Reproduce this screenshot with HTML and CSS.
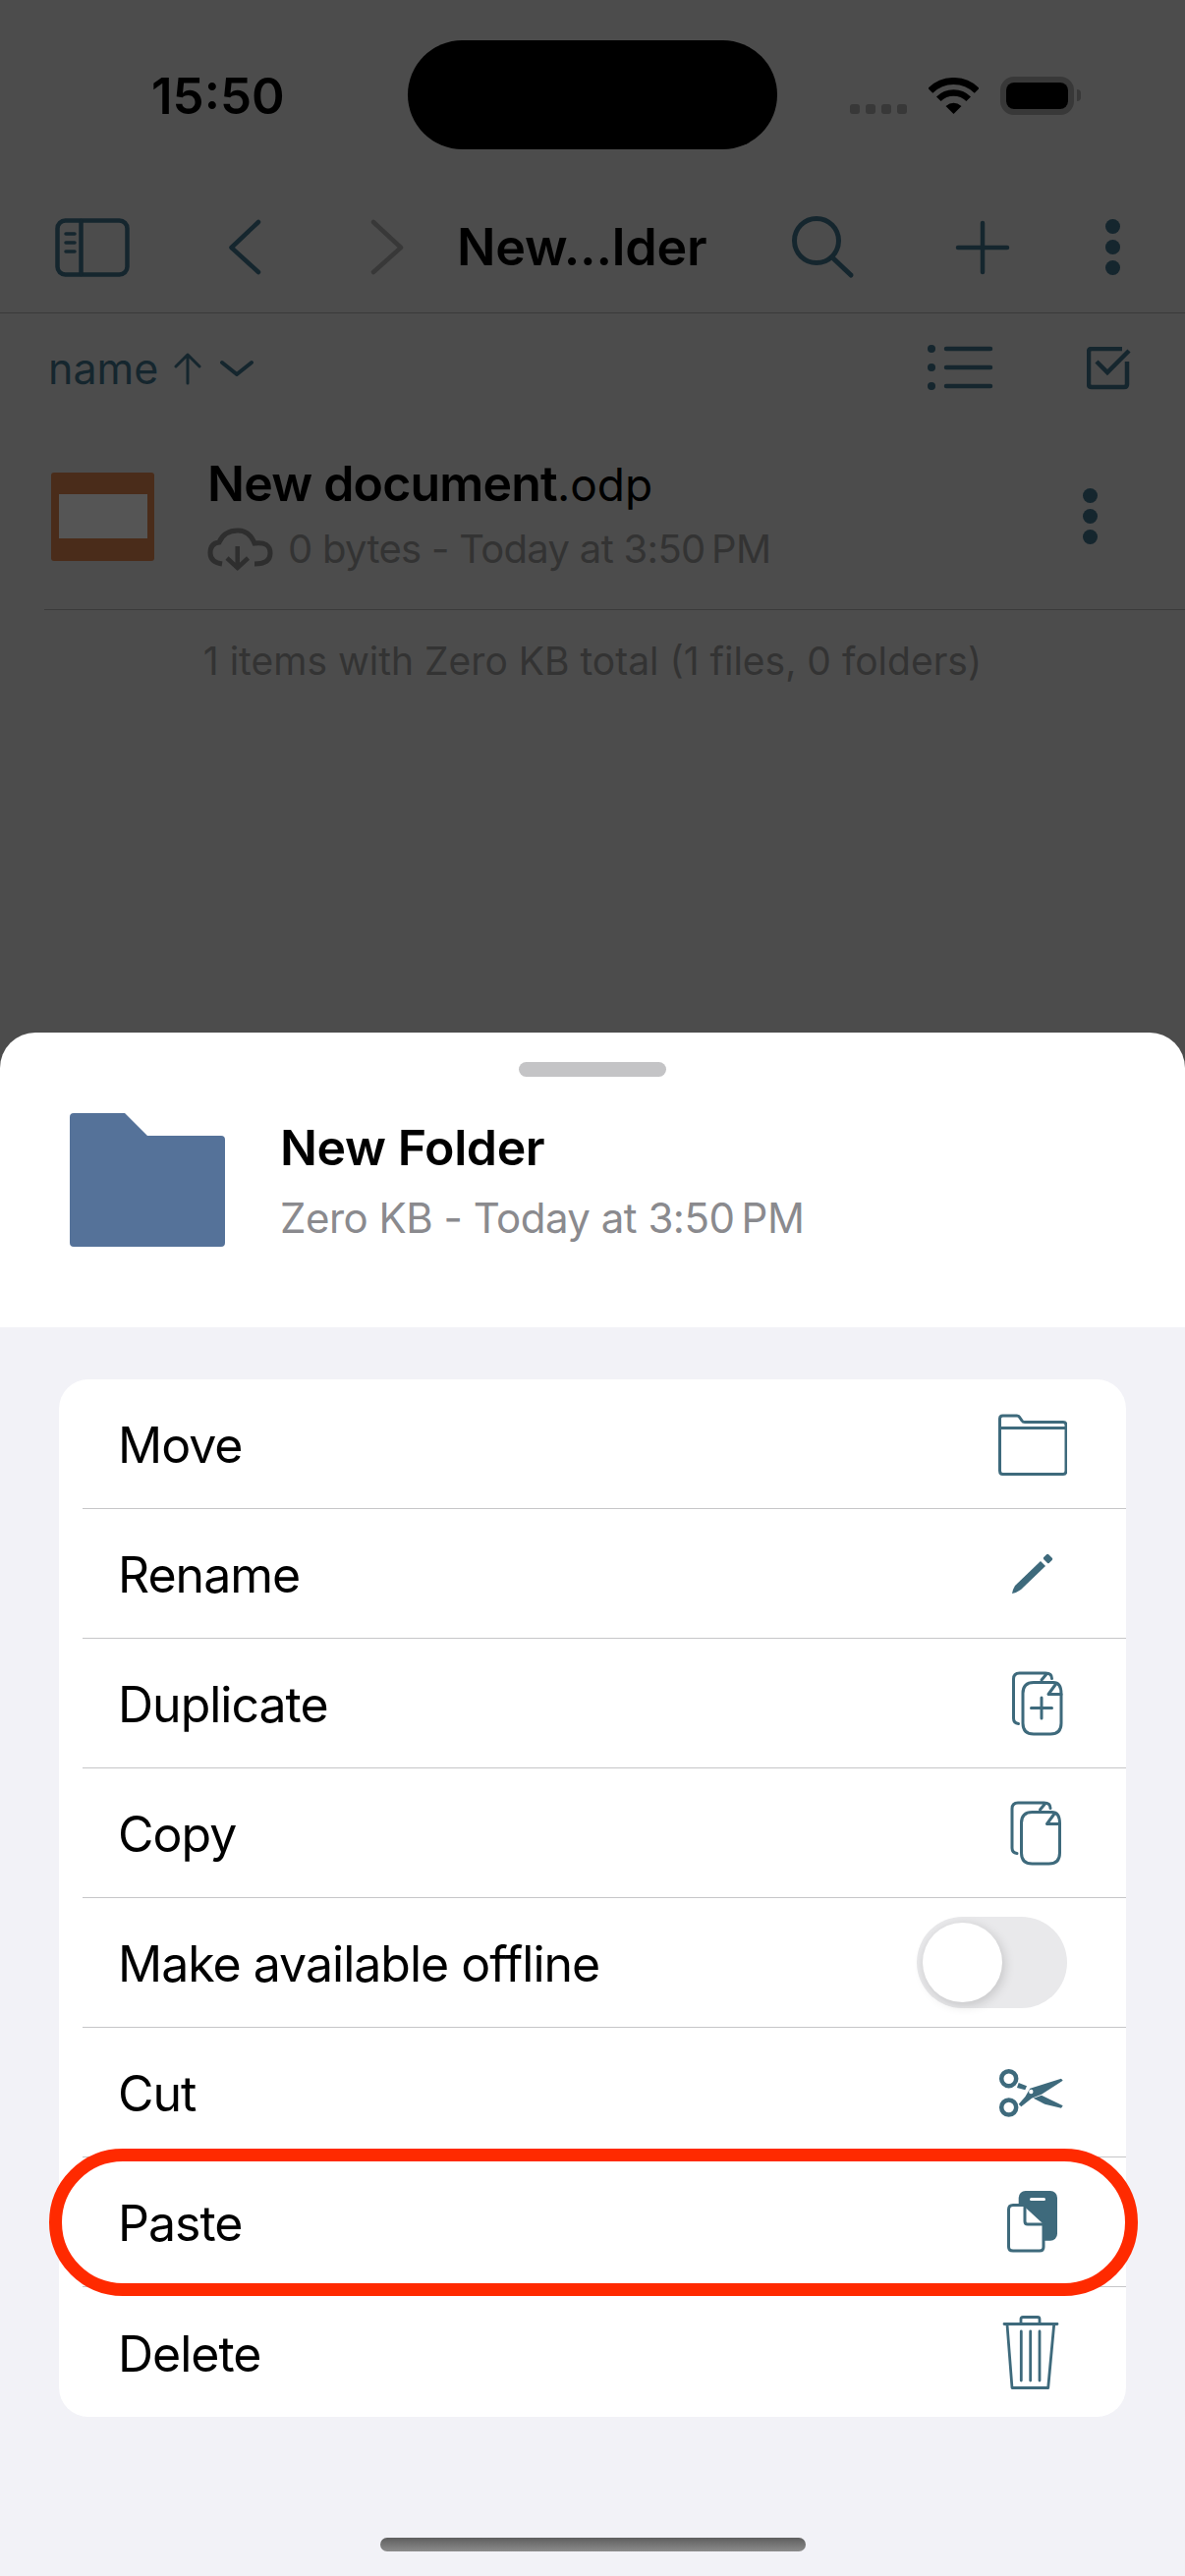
FILE: index.html
```html
<!DOCTYPE html>
<html lang="en">

<head>
  <meta charset="UTF-8">
  <meta name="viewport" content="width=device-width, initial-scale=1.0">
  <title>New Folder</title>
  <link rel="stylesheet" href="styles.css">
</head>

<body>
  <div class="page">
    <div class="backdrop">
      <div class="status">
        <div class="time">15:50</div>
        <div class="island"></div>
        <div class="signal"><i></i><i></i><i></i><i></i></div>
        <svg class="wifi" width="51" height="37" viewBox="0 0 51 37">
          <path d="M1.8 13.3A33.5 33.5 0 0 1 49.2 13.3" fill="none" stroke="#000" stroke-width="7" />
          <path d="M10.3 21.8A21.5 21.5 0 0 1 40.7 21.8" fill="none" stroke="#000" stroke-width="6.5" />
          <path d="M25.5 37L17.5 29Q25.5 22.5 33.5 29Z" fill="#000" />
        </svg>
        <div class="battery"><div class="battery-fill"></div></div>
        <div class="battery-cap"></div>
      </div>

      <div class="toolbar">
        <svg class="tb-sidebar" width="76" height="60" viewBox="0 0 76 60" fill="none" stroke="#15262e" stroke-width="4.5" stroke-linecap="round">
          <rect x="2.5" y="2.5" width="71" height="55" rx="8" />
          <path d="M26.5 3V57" />
          <path d="M11 16H20M11 25H20M11 34H20" stroke-width="3.5" />
        </svg>
        <svg class="tb-back" width="36" height="60" viewBox="0 0 36 60" fill="none" stroke="#15262e" stroke-width="4.5" stroke-linecap="round" stroke-linejoin="round">
          <path d="M31 4L3.500 30L31 55" />
        </svg>
        <svg class="tb-forward" width="36" height="60" viewBox="0 0 36 60" fill="none" stroke="#383838" stroke-width="4.500" stroke-linecap="round" stroke-linejoin="round">
          <path d="M4 4L32 30L4 55" />
        </svg>
        <div class="tb-title">New...lder</div>
        <svg class="tb-search" width="66" height="66" viewBox="0 0 66 66" fill="none" stroke="#15262e" stroke-width="5" stroke-linecap="round">
          <circle cx="27" cy="27" r="22.500" />
          <path d="M43 44L62 62" />
        </svg>
        <svg class="tb-plus" width="56" height="56" viewBox="0 0 56 56" fill="none" stroke="#15262e" stroke-width="4.500" stroke-linecap="round">
          <path d="M28 3V53M3 28H53" />
        </svg>
        <div class="dots tb-dots"><i></i><i></i><i></i></div>
      </div>

      <div class="sortbar">
        <div class="sort-label">name</div>
        <svg class="sort-arrow" width="28" height="34" viewBox="0 0 28 34" fill="none" stroke="#15262e" stroke-width="3" stroke-linecap="round" stroke-linejoin="round">
          <path d="M14 32V3M2 15L14 3L26 15" />
        </svg>
        <svg class="sort-caret" width="36" height="18" viewBox="0 0 36 18" fill="none" stroke="#15262e" stroke-width="4" stroke-linecap="round" stroke-linejoin="round">
          <path d="M3 3L18 15L33 3" />
        </svg>
        <svg class="sort-list" width="68" height="50" viewBox="0 0 68 50" fill="none" stroke="#15262e" stroke-width="4.500" stroke-linecap="round">
          <path d="M19 6H64M19 25H64M19 44H64" />
          <g fill="#15262e" stroke="none">
            <circle cx="4" cy="6" r="4" />
            <circle cx="4" cy="25" r="4" />
            <circle cx="4" cy="44" r="4" />
          </g>
        </svg>
        <svg class="sort-check" width="46" height="44" viewBox="0 0 46 44" fill="none" stroke="#15262e" stroke-width="4.500">
          <path d="M36 2H5Q2 2 2 5V38Q2 41 5 41H38Q41 41 41 38V15" />
          <path d="M10 15L21 26L43 4" />
        </svg>
      </div>

      <div class="file-row">
        <div class="file-icon"><div class="file-icon-inner"></div></div>
        <div class="file-info">
          <div class="file-name">New document<span class="file-ext">.odp</span></div>
          <div class="file-meta">
            <svg width="67" height="45" viewBox="0 0 67 45" fill="none" stroke="#2e2e2e" stroke-width="5">
              <path d="M15 37Q3 35 3 26Q3 16 12 15Q17 3 31 3Q43 3 48 16Q64 14 64 26Q64 37 48 37" />
              <path d="M30.700 19V41M20 31L30.700 41L41.500 31" stroke-width="4.500" />
            </svg>
            <span>0 bytes - Today at 3:50&thinsp;PM</span>
          </div>
        </div>
        <div class="dots file-dots"><i></i><i></i><i></i></div>
      </div>

      <div class="summary">1 items with Zero KB total (1 files, 0 folders)</div>
    </div>

    <div class="sheet">
      <div class="handle"></div>
      <div class="sheet-head">
        <svg width="158" height="136" viewBox="0 0 158 136">
          <path d="M4 0H56L79 23H154Q158 23 158 27V132Q158 136 154 136H4Q0 136 0 132V4Q0 0 4 0Z" fill="#557299" />
        </svg>
        <div class="sheet-info">
          <div class="sheet-title">New Folder</div>
          <div class="sheet-sub">Zero KB - Today at 3:50&thinsp;PM</div>
        </div>
      </div>
    </div>

    <div class="actions">
      <ul class="group">
        <li>
          <span>Move</span>
          <svg class="act-icon" width="76" height="76" viewBox="0 0 76 76">
            <path d="M7.500 22V12Q7.500 9 10.500 9H25Q27 9 28 11L30 14Q31 15.500 33 15.500H72Q75 15.500 75 18.500V65Q75 68.500 72 68.500H10.500Q7.500 68.500 7.500 65ZM7.500 21.500H75" />
          </svg>
        </li>
        <li>
          <span>Rename</span>
          <svg class="act-icon" width="76" height="76" viewBox="0 0 76 76">
            <path class="solid" d="M20 58Q21 53 23 50L49 25L54 30L29 54Q25 57 20 58Z" />
            <rect class="solid" x="52.500" y="19" width="8" height="7" rx="1.500" transform="rotate(45 56.500 22.500)" />
          </svg>
        </li>
        <li>
          <span>Duplicate</span>
          <svg class="act-icon" width="76" height="76" viewBox="0 0 76 76">
            <path d="M26.500 58.500Q21.500 58 21.500 53V13Q21.500 7 27.500 7H54Q60.500 7 60.500 12.500M50 14L55 8" />
            <path d="M42 16.500H62Q70 16.500 70 28V58Q70 69 59 69H42Q31 69 31 58V27.500Q31 16.500 42 16.500Z" />
            <path d="M65 17.500L57 28.500H70M50 32V53M39.500 42.500H60.500" />
          </svg>
        </li>
        <li>
          <span>Copy</span>
          <svg class="act-icon" width="76" height="76" viewBox="0 0 76 76">
            <path d="M25 58.500Q20 58 20 53V13Q20 7 26 7H52.500Q59 7 59 12.500M48.500 14L53.500 8" />
            <path d="M40.500 16.500H60.500Q68.500 16.500 68.500 28V58Q68.500 69 57.500 69H40.500Q29.500 69 29.500 58V27.500Q29.500 16.500 40.500 16.500Z" />
            <path d="M63.500 17.500L55.500 28.500H68.500" />
          </svg>
        </li>
        <li>
          <span>Make available offline</span>
          <div class="toggle"><div class="knob"></div></div>
        </li>
        <li>
          <span>Cut</span>
          <svg class="act-icon" width="76" height="76" viewBox="0 0 76 76">
            <circle cx="16.700" cy="23.700" r="7.500" stroke-width="4.500" />
            <circle cx="16.700" cy="53" r="7.500" stroke-width="4.500" />
            <path class="solid" d="M26.700 28L35 31.300L33.300 35.300L25 33Z" />
            <path class="solid" d="M26.700 49.700L33.300 42.300L38.300 33.700L70 23.700L71.700 25.700L50 39.700L40 43.700L29.300 52.300Z" />
            <path class="solid" d="M50 40.700L71.700 51.300L70 53.700L53.300 49.700L41.700 43.700Z" />
            <circle cx="39.300" cy="37" r="2.200" fill="#fff" stroke="none" />
          </svg>
        </li>
        <li>
          <span>Paste</span>
          <svg class="act-icon" width="76" height="76" viewBox="0 0 76 76">
            <rect class="solid" x="26.700" y="6" width="39.300" height="50.700" rx="7" />
            <rect x="38" y="13" width="16" height="3" rx="1.500" fill="#fff" stroke="none" />
            <path fill="#fff" d="M21 20.500H33L52 38V63Q52 67 48 67H21Q16.500 67 16.500 63V25Q16.500 20.500 21 20.500Z" />
            <path d="M33 21V37Q33 40 36 40H52" />
          </svg>
        </li>
        <li>
          <span>Delete</span>
          <svg class="act-icon" width="76" height="76" viewBox="0 0 76 76">
            <path d="M12 9.500H66M29 9V4.500Q29 2.500 31 2.500H46Q48 2.500 48 4.500V9M15 10L20 74.500H56.700L62.700 10" stroke-width="2.800" />
            <path d="M29.300 17V67M38.700 17V67M48 17V67" stroke-width="2.800" />
          </svg>
        </li>
      </ul>
      <div class="home-bar"></div>
    </div>

    <div class="highlight"></div>
  </div>
</body>

</html>
```

FILE: styles.css
```css
body,
html {
  width: 100%;
  height: 100%;
  padding: 0;
  margin: 0;
}

body {
  font-family: Inter, "Liberation Sans", sans-serif;
  background: #f2f2f7;
}

.page {
  position: relative;
  width: 1206px;
  height: 2622px;
  overflow: hidden;
  display: flex;
  flex-direction: column;
}

/* dimmed screen behind the sheet */
.backdrop {
  height: 1090px;
  margin-bottom: -39px;
  background: #4c4c4c;
  flex-shrink: 0;
}

.status {
  display: flex;
  height: 190px;
}

.time {
  width: 261px;
  margin-left: 154px;
  margin-top: 76px;
  font-size: 51px;
  line-height: 44px;
  font-weight: 600;
  color: #000;
}

.island {
  width: 376px;
  height: 111px;
  margin-top: 41px;
  border-radius: 56px;
  background: #000;
}

.signal {
  display: flex;
  gap: 6px;
  height: 10px;
  margin-left: 74px;
  margin-top: 106px;
}

.signal i {
  width: 10px;
  height: 10px;
  border-radius: 3px;
  background: #383838;
}

.wifi {
  margin-left: 22px;
  margin-top: 79px;
}

.battery {
  box-sizing: border-box;
  width: 75px;
  height: 39px;
  margin-left: 22px;
  margin-top: 78px;
  border: 6px solid #383838;
  border-radius: 14px;
}

.battery-fill {
  height: 100%;
  background: #000;
  border-radius: 8px;
}

.battery-cap {
  width: 4px;
  height: 12px;
  margin-left: 3px;
  margin-top: 91px;
  border-radius: 0 6px 6px 0;
  background: #383838;
}

.toolbar {
  display: flex;
  align-items: center;
  box-sizing: border-box;
  height: 129px;
  padding-bottom: 5px;
  border-bottom: 1px solid #3a3a3a;
}

.tb-sidebar {
  margin-left: 56px;
}

.tb-back {
  margin-left: 100px;
}

.tb-forward {
  margin-left: 108px;
}

.tb-title {
  width: 257px;
  margin-left: 53px;
  font-size: 52px;
  font-weight: 600;
  color: #000;
  letter-spacing: -0.2px;
  white-space: nowrap;
}

.tb-search {
  margin-left: 82px;
  margin-top: -2px;
}

.tb-plus {
  margin-left: 102px;
}

.dots {
  display: flex;
  flex-direction: column;
  gap: 6px;
}

.dots i {
  width: 15px;
  height: 15px;
  border-radius: 50%;
  background: #15262e;
}

.tb-dots {
  margin-left: 97px;
}

.sortbar {
  display: flex;
  align-items: center;
  height: 112px;
  padding-left: 49px;
}

.sort-label {
  font-size: 43px;
  color: #15262e;
}

.sort-arrow {
  margin-left: 16px;
}

.sort-caret {
  margin-left: 18px;
}

.sort-list {
  margin-left: 685px;
  margin-top: -2px;
}

.sort-check {
  margin-left: 94px;
}

.file-row {
  display: flex;
  align-items: center;
  box-sizing: border-box;
  height: 190px;
  margin-left: 45px;
  padding-left: 7px;
  border-bottom: 1px solid #3a3a3a;
}

.file-icon {
  display: flex;
  align-items: center;
  justify-content: center;
  width: 105px;
  height: 90px;
  border-radius: 3px;
  background: #4a2c1a;
}

.file-icon-inner {
  width: 90px;
  height: 45px;
  background: #555;
}

.file-info {
  flex: 1;
  margin-left: 54px;
  margin-top: -3px;
}

.file-name {
  font-size: 50px;
  line-height: 62px;
  font-weight: 600;
  color: #000;
  letter-spacing: -0.8px;
}

.file-ext {
  font-size: 46px;
  font-weight: 400;
  letter-spacing: 0;
}

.file-meta {
  display: flex;
  align-items: center;
  gap: 15px;
  margin-top: 7px;
  font-size: 40px;
  line-height: 56px;
  color: #333;
  letter-spacing: -0.7px;
}

.file-dots {
  margin-right: 89px;
}

.summary {
  margin-top: 24px;
  text-align: center;
  font-size: 39px;
  line-height: 56px;
  color: #333;
}

/* white header of the sheet */
.sheet {
  position: relative;
  height: 300px;
  box-sizing: border-box;
  padding-top: 30px;
  border-radius: 36px 36px 0 0;
  background: #fff;
  flex-shrink: 0;
}

.handle {
  width: 150px;
  height: 15px;
  margin: 0 auto;
  border-radius: 8px;
  background: #c4c4c6;
}

.sheet-head {
  display: flex;
  align-items: center;
  margin-top: 37px;
  padding-left: 71px;
}

.sheet-info {
  margin-left: 56px;
  margin-bottom: -6px;
}

.sheet-title {
  font-size: 50px;
  line-height: 66px;
  font-weight: 600;
  color: #000;
  letter-spacing: -0.4px;
}

.sheet-sub {
  margin-top: 6px;
  font-size: 42px;
  line-height: 66px;
  color: #8a8a8e;
  letter-spacing: -0.5px;
}

.actions {
  flex: 1;
  padding-top: 53px;
  background: #f2f2f7;
}

.group {
  list-style-type: none;
  margin: 0 60px;
  padding: 0;
  border-radius: 30px;
  background: #fff;
}

.group li {
  display: flex;
  align-items: center;
  justify-content: space-between;
  box-sizing: border-box;
  height: 132px;
  margin-left: 24px;
  padding-left: 36px;
  padding-right: 60px;
  border-bottom: 1px solid #c6c6c8;
  font-size: 50px;
  color: #000;
  letter-spacing: -1px;
}

.group li span {
  margin-top: 3px;
}

.group li:last-child {
  border-bottom: 0;
}

.act-icon {
  fill: none;
  stroke: #3e6a7c;
  stroke-width: 3;
  stroke-linecap: round;
  stroke-linejoin: round;
}

.act-icon .solid {
  fill: #3e6a7c;
  stroke: none;
}

.toggle {
  box-sizing: border-box;
  width: 153px;
  height: 93px;
  padding: 6px;
  border-radius: 47px;
  background: #e9e9eb;
}

.knob {
  width: 81px;
  height: 81px;
  border-radius: 50%;
  background: #fff;
  box-shadow: 2px 3px 12px rgba(0, 0, 0, 0.16);
}

.home-bar {
  width: 433px;
  height: 14px;
  margin: 123px auto 0;
  border-radius: 7px;
  background: linear-gradient(#5e5e5e, #8c8c8c);
}

/* red annotation around Paste */
.highlight {
  position: absolute;
  left: 50px;
  top: 2187px;
  box-sizing: border-box;
  width: 1108px;
  height: 150px;
  border: 13px solid #ff2a00;
  border-radius: 75px;
}
```
